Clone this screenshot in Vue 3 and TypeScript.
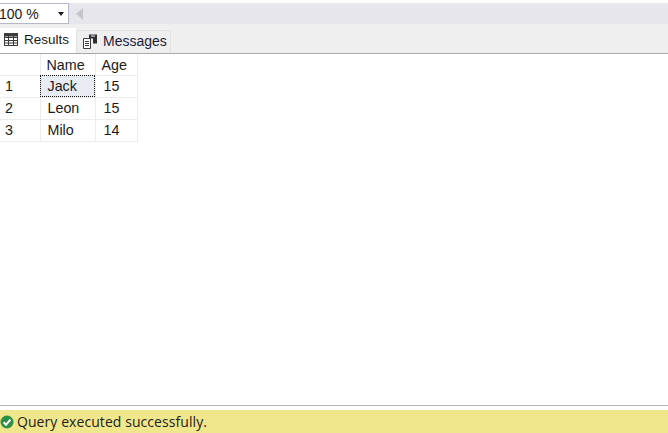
<template>
  <div class="pane">
    <div class="toolbar">
      <div class="zoom-box">
        <span class="zoom-value">100 %</span>
        <span class="zoom-arrow"></span>
      </div>
      <span class="scroll-left"></span>
    </div>

    <div class="tabs">
      <div class="tab active">
        <svg width="14" height="13" viewBox="0 0 14 13" class="tab-icon">
          <rect x="0.5" y="0.5" width="13" height="12" fill="#fff" stroke="#3c3c3c" />
          <path d="M0.5 4.5h13M0.5 7.5h13M0.5 10h13M4.5 1v12M9.5 1v12" stroke="#3c3c3c" fill="none" />
          <rect x="0.5" y="0.5" width="13" height="3" fill="#3c3c3c" />
        </svg>
        <span>Results</span>
      </div>
      <div class="tab">
        <svg width="16" height="15" viewBox="0 0 16 15" class="tab-icon">
          <path d="M1.5 4.5h7v10h-7z" fill="#fff" stroke="#3c3c3c" />
          <path d="M3 7.5h4M3 9.5h4M3 11.5h4" stroke="#3c3c3c" fill="none" />
          <path d="M7 0.5h8v9h-4v-5H7z" fill="#2f2f33" />
          <path d="M9 2h4" stroke="#fff" fill="none" />
        </svg>
        <span>Messages</span>
      </div>
    </div>

    <div class="grid-area">
      <table class="grid">
        <thead>
          <tr>
            <th class="num"></th>
            <th class="name">Name</th>
            <th class="age">Age</th>
          </tr>
        </thead>
        <tbody>
          <tr v-for="(row, i) in rows" :key="row.name">
            <td class="num">{{ i + 1 }}</td>
            <td class="name" :class="{ selected: i === 0 }">{{ row.name }}</td>
            <td class="age">{{ row.age }}</td>
          </tr>
        </tbody>
      </table>
    </div>

    <div class="status">
      <svg width="14" height="14" viewBox="0 0 14 14" class="status-icon">
        <circle cx="7" cy="7" r="6.5" fill="#2f8f46" />
        <path d="M3.6 7.2l2.4 2.5 4.4-5" stroke="#fff" stroke-width="2" fill="none" />
      </svg>
      <span class="status-text">Query executed successfully.</span>
    </div>
  </div>
</template>

<script setup lang="ts">
const rows = [
  { name: 'Jack', age: 15 },
  { name: 'Leon', age: 15 },
  { name: 'Milo', age: 14 },
]
</script>

<style scoped>
.pane {
  width: 668px;
  height: 433px;
  display: flex;
  flex-direction: column;
  background: #fff;
  font-family: 'Liberation Sans', Arial, sans-serif;
  font-size: 14px;
  color: #1a1a1a;
  overflow: hidden;
}

.toolbar {
  margin-top: 3px;
  height: 21px;
  flex: none;
  display: flex;
  align-items: center;
  background: #e6e6ec;
}

.zoom-box {
  width: 69px;
  height: 21px;
  box-sizing: border-box;
  background: #fff;
  border: 1px solid #b4b8c8;
  border-left: none;
  display: flex;
  align-items: center;
  justify-content: space-between;
  padding-right: 4px;
}

.zoom-value {
  margin-left: -1px;
}

.zoom-arrow {
  width: 0;
  height: 0;
  border-left: 3.5px solid transparent;
  border-right: 3.5px solid transparent;
  border-top: 4px solid #1a1a1a;
}

.scroll-left {
  margin-left: 7px;
  width: 0;
  height: 0;
  border-top: 6px solid transparent;
  border-bottom: 6px solid transparent;
  border-right: 7px solid #c4c6cc;
}

.tabs {
  height: 30px;
  flex: none;
  box-sizing: border-box;
  display: flex;
  align-items: flex-end;
  background: #efefef;
  border-bottom: 1px solid #a9a9a9;
}

.tab {
  height: 23px;
  box-sizing: border-box;
  padding: 0 3px 2px 5px;
  display: flex;
  align-items: center;
  gap: 5px;
  color: #1c1c3a;
  font-size: 14px;
  border: 1px solid #e2e2e2;
  border-bottom: none;
}

.tab.active {
  height: 25px;
  width: 76px;
  padding: 0 0 3px 4px;
  gap: 6px;
  background: #fff;
  border: none;
  color: #1a1a1a;
  font-size: 13.5px;
}

.tab-icon {
  flex: none;
}

.grid-area {
  flex: 1;
  min-height: 0;
  border-bottom: 1px solid #b5b5b5;
}

.grid {
  border-collapse: collapse;
  table-layout: fixed;
  width: 137px;
  font-size: 14.3px;
}

.grid th,
.grid td {
  height: 22px;
  box-sizing: border-box;
  padding: 0;
  font-weight: 400;
  text-align: left;
  border: 1px solid #ececec;
}

.grid th {
  height: 21px;
  padding-top: 2px;
  border-top: none;
}

.num {
  width: 40px;
  border-left: none !important;
  padding-left: 5px !important;
}

.name {
  width: 55px;
  padding-left: 7px !important;
}

.grid th.name {
  padding-left: 6px !important;
}

.age {
  width: 42px;
  padding-left: 8px !important;
}

.grid th.age {
  padding-left: 6px !important;
}

.grid td.selected {
  background: #e8ecf2;
  outline: 1px dotted #111;
  outline-offset: -1px;
}

.status {
  margin-top: 4px;
  height: 23px;
  flex: none;
  display: flex;
  align-items: center;
  gap: 3px;
  background: #f0e68c;
  font-family: 'Open Sans', 'Liberation Sans', sans-serif;
  font-size: 14px;
  color: #222;
}

.status-text {
  letter-spacing: 0.07px;
}

.status-icon {
  flex: none;
}
</style>
